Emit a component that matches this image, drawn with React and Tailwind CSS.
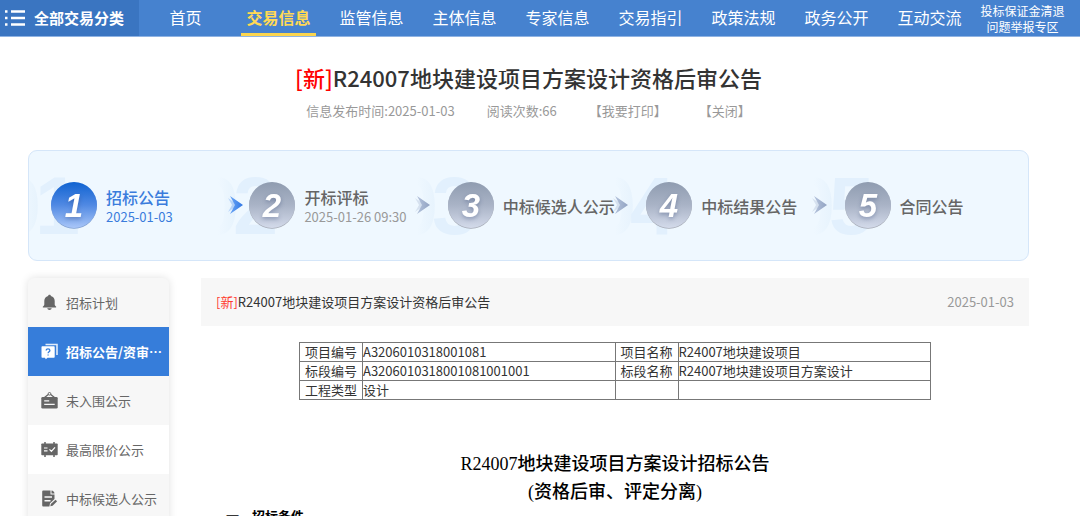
import clsx from "clsx";

const NAV = ["首页", "交易信息", "监管信息", "主体信息", "专家信息", "交易指引", "政策法规", "政务公开", "互动交流"];
const ACTIVE_NAV = "交易信息";

const STEPS = [
  { title: "招标公告", date: "2025-01-03", active: true },
  { title: "开标评标", date: "2025-01-26 09:30", arrow: "blue" },
  { title: "中标候选人公示", arrow: "gray" },
  { title: "中标结果公告", arrow: "gray" },
  { title: "合同公告", arrow: "gray" },
];

const SIDEBAR = [
  { label: "招标计划", icon: BellIcon },
  { label: "招标公告/资审…", icon: QuestionIcon, active: true },
  { label: "未入围公示", icon: BoardIcon },
  { label: "最高限价公示", icon: CheckBoardIcon, light: true },
  { label: "中标候选人公示", icon: DocIcon },
];

const ROWS = [
  ["项目编号", "A3206010318001081", "项目名称", "R24007地块建设项目"],
  ["标段编号", "A3206010318001081001001", "标段名称", "R24007地块建设项目方案设计"],
  ["工程类型", "设计", "", ""],
];

function BellIcon() {
  return (
    <svg viewBox="0 0 17 17" className="size-[17px]" fill="currentColor" aria-hidden="true">
      <path d="M8.500.8c.9 0 1.400.6 1.400 1.300 2.400.6 3.800 2.500 3.800 4.900v3.400c0 .9.5 1.400 1.300 2.100.4.400.2 1-.4 1H2.400c-.6 0-.8-.6-.4-1 .8-.7 1.300-1.200 1.300-2.100V7c0-2.400 1.400-4.300 3.800-4.900 0-.7.5-1.300 1.400-1.300Z" />
      <path d="M6.300 14.200h4.400c-.2 1-1.100 1.700-2.200 1.700s-2-.7-2.200-1.700Z" />
    </svg>
  );
}

function QuestionIcon() {
  return (
    <svg viewBox="0 0 17 17" className="size-[17px]" aria-hidden="true">
      <path d="M4.500 1.500H16v10.500" fill="none" stroke="currentColor" strokeWidth="1.600" opacity=".85" />
      <path d="M1.500 3.300h11.200c.6 0 1 .4 1 1v9.400c0 .6-.4 1-1 1H6.500L4.800 16.300l-.8-1.600H1.500c-.6 0-1-.4-1-1V4.300c0-.6.4-1 1-1Z" fill="currentColor" />
      <path d="M5.200 7.500C5.200 6.400 6 5.800 7 5.800s1.900.6 1.900 1.600c0 1.300-1.800 1.400-1.800 2.900M7.100 11.400v1.200" fill="none" stroke="#367dda" strokeWidth="1.300" />
    </svg>
  );
}

function BoardIcon() {
  return (
    <svg viewBox="0 0 17 17" className="size-[17px]" aria-hidden="true">
      <path d="M3.500 5.500 7.300 2.500M13.500 5.500 9.700 2.500" stroke="currentColor" strokeWidth="1.300" />
      <circle cx="8.500" cy="1.800" r="1.300" fill="none" stroke="currentColor" />
      <rect x=".3" y="5" width="16.400" height="11.500" rx="1.300" fill="currentColor" />
      <path d="M3.200 8.800h5M3.200 12.300h10.500" stroke="#f7f7f7" strokeWidth="1.200" />
    </svg>
  );
}

function CheckBoardIcon() {
  return (
    <svg viewBox="0 0 17 17" className="size-[17px]" aria-hidden="true">
      <path d="M4 1v15M13 1v15" stroke="currentColor" strokeWidth="1.500" />
      <rect x=".3" y="2.500" width="16.400" height="11.800" rx=".8" fill="currentColor" />
      <path d="M3 7h3.500M3 9.800h3.500M8.500 8.300l1.900 2L14 6.300" fill="none" stroke="#fff" strokeWidth="1.200" />
    </svg>
  );
}

function DocIcon() {
  return (
    <svg viewBox="0 0 17 17" className="size-[17px]" aria-hidden="true">
      <path d="M2.500.5h7v4h4V9l-4.500 4.300-.6 3.200H2.500c-.8 0-1.300-.5-1.300-1.300V1.800C1.200 1 1.700.5 2.500.5Z" fill="currentColor" />
      <path d="M10.500.5c1.700.2 2.800 1.300 3 3h-3Z" fill="currentColor" />
      <path d="M3.500 7h7.500M3.500 10.700h6" stroke="#f7f7f7" strokeWidth="1.400" />
      <path d="m9.300 16.200.5-2.200 4.700-4.300 1.600 1.600-4.500 4.400Z" fill="currentColor" />
    </svg>
  );
}

function StepDefs() {
  return (
    <svg className="absolute size-0" aria-hidden="true">
      <defs>
        <linearGradient id="ballBlue" x1="0" y1="0" x2="0" y2="1">
          <stop offset="0" stopColor="#1063d1" />
          <stop offset=".5" stopColor="#5089e3" />
          <stop offset="1" stopColor="#a9c6f8" />
        </linearGradient>
        <linearGradient id="ballGray" x1="0" y1="0" x2="0" y2="1">
          <stop offset="0" stopColor="#8f9cb0" />
          <stop offset=".5" stopColor="#a9b3c6" />
          <stop offset="1" stopColor="#d3daea" />
        </linearGradient>
        <linearGradient id="arrowBlue" x1="0" y1="0" x2="1" y2="0">
          <stop offset="0" stopColor="#6ba5f5" />
          <stop offset="1" stopColor="#2f76e4" />
        </linearGradient>
        <linearGradient id="arrowGray" x1="0" y1="0" x2="1" y2="0">
          <stop offset="0" stopColor="#b4c3dc" />
          <stop offset="1" stopColor="#92a3c2" />
        </linearGradient>
        <linearGradient id="ghostZero" gradientUnits="userSpaceOnUse" x1="-54" y1="0" x2="-36" y2="0">
          <stop offset="0" stopColor="#e7f3fd" stopOpacity="0" />
          <stop offset="1" stopColor="#e7f3fd" />
        </linearGradient>
      </defs>
    </svg>
  );
}

function StepBadge({ number, active, arrow }) {
  return (
    <svg viewBox="-42 -31 65 64" className="h-16 w-[65px] shrink-0 overflow-visible" fontFamily="Liberation Sans, sans-serif" fontWeight="700">
      <g fontSize="81" aria-hidden="true">
        <text x="-78" y="29" fill="url(#ghostZero)">0</text>
        <text x="-39" y="29" fill="#e2f0fd">{number}</text>
      </g>
      <circle cy=".7" r="23" fill={active ? "#7f9fd0" : "#a5aab5"} />
      <circle r="23" fill={active ? "url(#ballBlue)" : "url(#ballGray)"} />
      {arrow === "blue" && (
        <g fill="url(#arrowBlue)">
          <path d="M-44-7-34 0-44 7-40 0Z" opacity=".35" />
          <path d="M-42-9-29 0-42 9-37 0Z" />
        </g>
      )}
      {arrow === "gray" && (
        <g fill="url(#arrowGray)">
          <path d="M-56-7-46 0-56 7-52 0Z" opacity=".35" />
          <path d="M-54-9-41 0-54 9-49 0Z" />
        </g>
      )}
      <text
        y="12"
        textAnchor="middle"
        fontSize="33"
        fontStyle="italic"
        fill="#fff"
        className="drop-shadow-[0_2px_2px_rgba(40,60,110,0.35)]"
      >
        {number}
      </text>
    </svg>
  );
}

export default function App() {
  return (
    <div className="min-h-screen bg-white font-['Noto_Sans_CJK_SC',sans-serif] text-[13px] leading-5 text-[#333]">
      <header className="flex h-[37px] border-b border-[#8fb3e3] bg-[#4682cf] text-white">
        <button type="button" className="flex w-[139px] items-center gap-[9px] bg-[#3a75c1] pl-[5px] text-[15px] font-bold">
          <svg viewBox="0 0 20 18" className="h-[18px] w-5" stroke="currentColor" strokeWidth="2.400" aria-hidden="true">
            <path d="M0 2.500h2.500M6 2.500h14M0 9h2.500M6 9h14M0 15.500h2.500M6 15.500h14" />
          </svg>
          全部交易分类
        </button>
        <nav className="flex flex-1">
          {NAV.map((item) => (
            <a key={item} href="#" className="flex flex-1 justify-center text-base leading-[34px]">
              <span
                className={clsx(
                  "border-b-[3px] px-[5px]",
                  item === ACTIVE_NAV ? "border-[#fbd54e] font-bold text-[#ffd955]" : "border-transparent"
                )}
              >
                {item}
              </span>
            </a>
          ))}
        </nav>
        <div className="flex w-[104px] flex-col items-center justify-center pr-[11px] pt-0.5 text-xs leading-4">
          <a href="#">投标保证金清退</a>
          <a href="#">问题举报专区</a>
        </div>
      </header>

      <main className="ml-7 mr-[51px] pt-6">
        <h1 className="text-center text-[22px] font-medium leading-8">
          <span className="text-[#f00]">[新]</span>R24007地块建设项目方案设计资格后审公告
        </h1>
        <div className="mt-2 flex justify-center gap-8 text-[#999]">
          <span>信息发布时间:2025-01-03</span>
          <span>阅读次数:66</span>
          <button type="button">【我要打印】</button>
          <button type="button">【关闭】</button>
        </div>

        {/* Progress steps */}
        <StepDefs />
        <ol className="mt-[29px] grid h-[111px] grid-cols-5 items-center overflow-hidden rounded-[9px] border border-[#d5e6f9] bg-[#eff8ff] pl-[3px] pr-1">
          {STEPS.map((step, i) => (
            <li key={step.title} className="flex min-w-0 items-center gap-[9px]">
              <StepBadge number={i + 1} active={step.active} arrow={step.arrow} />
              <div className={clsx("whitespace-nowrap", step.active ? "text-[#3a7cdc]" : "text-[#999]")}>
                <p className={clsx("text-base font-medium leading-5", !step.active && "text-[#666]")}>{step.title}</p>
                {step.date && <p className="mt-0.5 leading-4">{step.date}</p>}
              </div>
            </li>
          ))}
        </ol>

        <div className="mt-[17px] flex items-start gap-8">
          <nav className="w-[141px] shrink-0 rounded-t-md bg-[#f7f7f7] shadow-[0_0_8px_rgba(0,0,0,0.12)]">
            {SIDEBAR.map(({ label, icon: Icon, active, light }) => (
              <a
                key={label}
                href="#"
                className={clsx(
                  "flex h-[49px] items-center gap-2 pl-[13px]",
                  active ? "bg-[#367dda] font-bold text-white" : "text-[#666]",
                  light && "bg-white"
                )}
              >
                <Icon />
                {label}
              </a>
            ))}
          </nav>

          <article className="min-w-0 flex-1">
            <div className="flex h-12 items-center justify-between bg-[#f7f7f7] px-[15px]">
              <h2>
                <span className="text-[#ff3b30]">[新]</span>R24007地块建设项目方案设计资格后审公告
              </h2>
              <time className="text-[#999]">2025-01-03</time>
            </div>

            <table className="mx-auto mt-4 w-[632px] table-fixed border-collapse leading-[18px]">
              <colgroup>
                <col className="w-[63px]" />
                <col />
                <col className="w-[63px]" />
                <col />
              </colgroup>
              <tbody>
                {ROWS.map((row) => (
                  <tr key={row[0]} className="h-[19px]">
                    {row.map((cell, i) => (
                      <td key={i} className={clsx("border border-[#777] p-0", i % 2 === 0 && "text-center")}>
                        {cell}
                      </td>
                    ))}
                  </tr>
                ))}
              </tbody>
            </table>

            <div className="mt-[50px] text-center font-['Liberation_Serif','Noto_Sans_CJK_SC',serif] text-lg font-medium leading-7 text-black">
              <p>R24007地块建设项目方案设计招标公告</p>
              <p>(资格后审、评定分离)</p>
            </div>
            <h3 className="pl-[25px] font-bold text-black">一、招标条件</h3>
          </article>
        </div>
      </main>
    </div>
  );
}
